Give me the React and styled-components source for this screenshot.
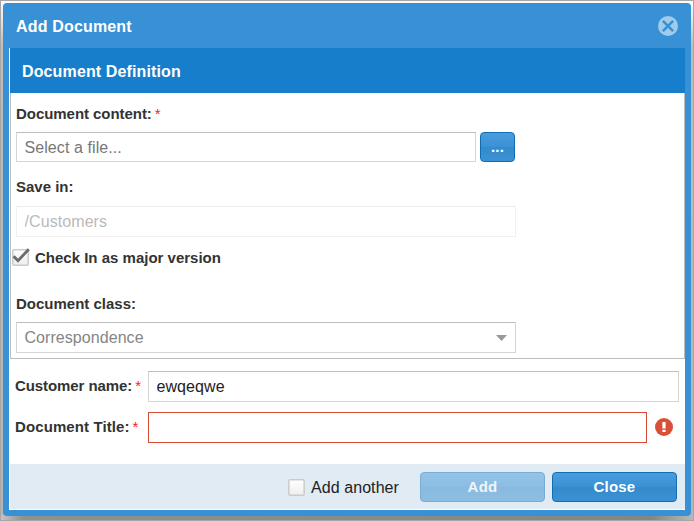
import React from "react";
import styled, { createGlobalStyle } from "styled-components";

const GlobalStyle = createGlobalStyle`
  * { box-sizing: border-box; }
  body { margin: 0; font-family: "Liberation Sans", Arial, sans-serif; }
  input, button { font-family: inherit; }
`;

const Backdrop = styled.main`
  width: 694px;
  height: 521px;
  padding: 2px;
  border: 1px solid #a8a6a7;
  background:
    linear-gradient(90deg, #c4c4c4, #909090 22px, #858585 650px, #b8b8b8) 0 bottom / 100% 5px no-repeat,
    linear-gradient(#fcfcfc, #e6e6e6 18px, #bcbcbc 45px, #b5b5b5);
`;

const Dialog = styled.section`
  display: flex;
  flex-direction: column;
  width: 688px;
  height: 513px;
  padding: 0 6px 6px;
  border-radius: 4px;
  background: #3991d5;
`;

const TitleBar = styled.header`
  display: flex;
  flex: 0 0 45px;
  align-items: center;
  justify-content: space-between;
  padding: 1px 7px 0;
  color: #fff;
`;

const Title = styled.h1`
  margin: 0;
  padding-top: 2px;
  font-size: 16px;
  line-height: 20px;
  letter-spacing: 0.17px;
`;

const CloseIcon = styled.button`
  display: flex;
  padding: 0;
  border: 0;
  background: none;
`;

const Content = styled.div`
  display: flex;
  flex: 1;
  flex-direction: column;
  padding: 0 0 1px 1px;
  background: #fff;
`;

const SectionTitle = styled.h2`
  display: flex;
  flex: 0 0 45px;
  align-items: center;
  margin: 0;
  padding: 3px 0 0 12px;
  background: #167ecb;
  color: #fff;
  font-size: 16px;
  line-height: 20px;
  letter-spacing: 0.13px;
`;

const Definition = styled.div`
  display: flex;
  flex: 0 0 266px;
  flex-direction: column;
  padding: 12px 0 0 5px;
  border: 1px solid #bdbdbd;
  border-top: 0;
`;

const Label = styled.label`
  display: block;
  height: 18px;
  color: #333;
  font-size: 15px;
  font-weight: bold;
  line-height: 18px;
  letter-spacing: ${(p) => p.$tracking || 0}px;
  white-space: nowrap;
`;

const PropertyLabel = styled(Label)`
  height: 20px;
`;

const Required = styled.span`
  margin-left: 3px;
  color: #fb2020;
  font-size: 15px;
  font-weight: normal;
  letter-spacing: 0;
`;

const Field = styled.div`
  margin-bottom: ${(p) => p.$after}px;
`;

const FieldRow = styled.div`
  display: flex;
  gap: 4px;
  margin-top: ${(p) => p.$before || 9}px;
`;

const TextBox = styled.input`
  display: block;
  width: ${(p) => p.$width}px;
  height: ${(p) => p.$height || 31}px;
  padding: 1px 8px 0 7.5px;
  border: 1px solid ${(p) => (p.$faint ? "#f0f0f0" : "#d5d5d5")};
  border-top-color: ${(p) => (p.$faint ? "#ececec" : "#bdbdbd")};
  border-radius: 0;
  outline: 0;
  background: #fff;
  color: ${(p) => (p.$faint ? "#bababa" : "#222")};
  font-size: 16px;
  letter-spacing: 0.08px;
  ${(p) => p.$invalid && "border-color: #d54c34;"}

  &::placeholder { color: #777; opacity: 1; }
`;

const SelectBox = styled.div`
  display: flex;
  align-items: center;
  justify-content: space-between;
  width: 500px;
  height: 31px;
  margin-top: 9px;
  padding: 0 8px 0 7.5px;
  border: 1px solid #d5d5d5;
  border-top-color: #bdbdbd;
  color: #858585;
  font-size: 16px;
  letter-spacing: 0.06px;
`;

const Button = styled.button`
  width: ${(p) => p.$width}px;
  height: 30px;
  padding: 0;
  border: 1px solid #126eb4;
  border-radius: 4px;
  background: linear-gradient(#4b9cdc, #3991d5 50%, #348aca 50%, #3a92d5);
  color: #fff;
  font-size: 15px;
  font-weight: bold;
  line-height: 28px;
  letter-spacing: 0.2px;

  &:disabled { opacity: 0.5; }
`;

const CheckRow = styled.div`
  display: flex;
  align-items: center;
  gap: 6px;
  height: 20px;
  margin: 0 0 27px -4px;

  svg { margin-bottom: 2px; }
`;

const Properties = styled.div`
  display: grid;
  grid-template-columns: 133px 1fr;
  row-gap: 10px;
  align-items: center;
  padding: 12px 6px 0 5px;
`;

const InvalidRow = styled.div`
  display: flex;
  align-items: center;
  gap: 8px;

  svg { margin-bottom: 2px; }
`;

const Footer = styled.footer`
  display: flex;
  align-items: center;
  justify-content: flex-end;
  height: 45px;
  margin-top: auto;
  padding: 0 8px 0 0;
  background: #e0ebf4;
`;

const AddAnother = styled.label`
  display: flex;
  align-items: center;
  gap: 6px;
  height: 20px;
  margin: 2px 21px 0 0;
  color: #222;
  font-size: 16px;
  line-height: 20px;
  letter-spacing: 0.08px;
`;

const Actions = styled.div`
  display: flex;
  gap: 7px;
`;

function CheckMark({ checked }) {
  return (
    <svg width="17" height="17" viewBox="0 0 17 17" overflow="visible">
      <defs>
        <linearGradient id="boxFill" x1="0" y1="0" x2="0" y2="1">
          <stop offset="0" stopColor="#fff" />
          <stop offset="1" stopColor="#eeeeee" />
        </linearGradient>
      </defs>
      <rect x="0.8" y="0.8" width="15.4" height="15.4" rx="1" fill="url(#boxFill)" stroke="#cbcbcb" strokeWidth="1.5" />
      {checked && <path d="M1.6 7.2 6 11.8 16.8 0.2" fill="none" stroke="#6b6b6b" strokeWidth="2.8" />}
    </svg>
  );
}

export default function App() {
  return (
    <Backdrop>
      <GlobalStyle />
      <Dialog>
        <TitleBar>
          <Title>Add Document</Title>
          <CloseIcon aria-label="Close dialog">
            <svg width="20" height="20" viewBox="0 0 20 20">
              <circle cx="10" cy="10" r="10" fill="#a1cbeb" />
              <path d="M4.9 4.9 15.1 15.1M15.1 4.9 4.9 15.1" stroke="#3991d5" strokeWidth="2.6" />
            </svg>
          </CloseIcon>
        </TitleBar>
        <Content>
          <SectionTitle>Document Definition</SectionTitle>
          <Definition>
            <Field $after={16}>
              <Label $tracking={-0.05}>Document content:<Required>*</Required></Label>
              <FieldRow>
                <TextBox $width={460} $height={30} placeholder="Select a file..." />
                <Button $width={35}>...</Button>
              </FieldRow>
            </Field>
            <Field $after={11}>
              <Label>Save in:</Label>
              <FieldRow $before={10}>
                <TextBox $width={500} $faint readOnly value="/Customers" />
              </FieldRow>
            </Field>
            <CheckRow>
              <CheckMark checked />
              <Label>Check In as major version</Label>
            </CheckRow>
            <Field $after={0}>
              <Label>Document class:</Label>
              <SelectBox>
                Correspondence
                <svg width="11" height="6" viewBox="0 0 11 6">
                  <path d="M0 0H11L5.5 6Z" fill="#989898" />
                </svg>
              </SelectBox>
            </Field>
          </Definition>
          <Properties>
            <PropertyLabel $tracking={-0.08}>Customer name:<Required>*</Required></PropertyLabel>
            <TextBox $width={531} readOnly value="ewqeqwe" />
            <PropertyLabel $tracking={0.1}>Document Title:<Required>*</Required></PropertyLabel>
            <InvalidRow>
              <TextBox $width={499} $invalid readOnly value="" />
              <svg width="18" height="18" viewBox="0 0 18 18">
                <circle cx="9" cy="9" r="9" fill="#d94f38" />
                <path d="M7.4 4H10.6V10.5H7.4ZM7.4 11.7H10.6V14H7.4Z" fill="#fff" />
              </svg>
            </InvalidRow>
          </Properties>
          <Footer>
            <AddAnother>
              <CheckMark />
              Add another
            </AddAnother>
            <Actions>
              <Button $width={125} disabled>Add</Button>
              <Button $width={125}>Close</Button>
            </Actions>
          </Footer>
        </Content>
      </Dialog>
    </Backdrop>
  );
}
